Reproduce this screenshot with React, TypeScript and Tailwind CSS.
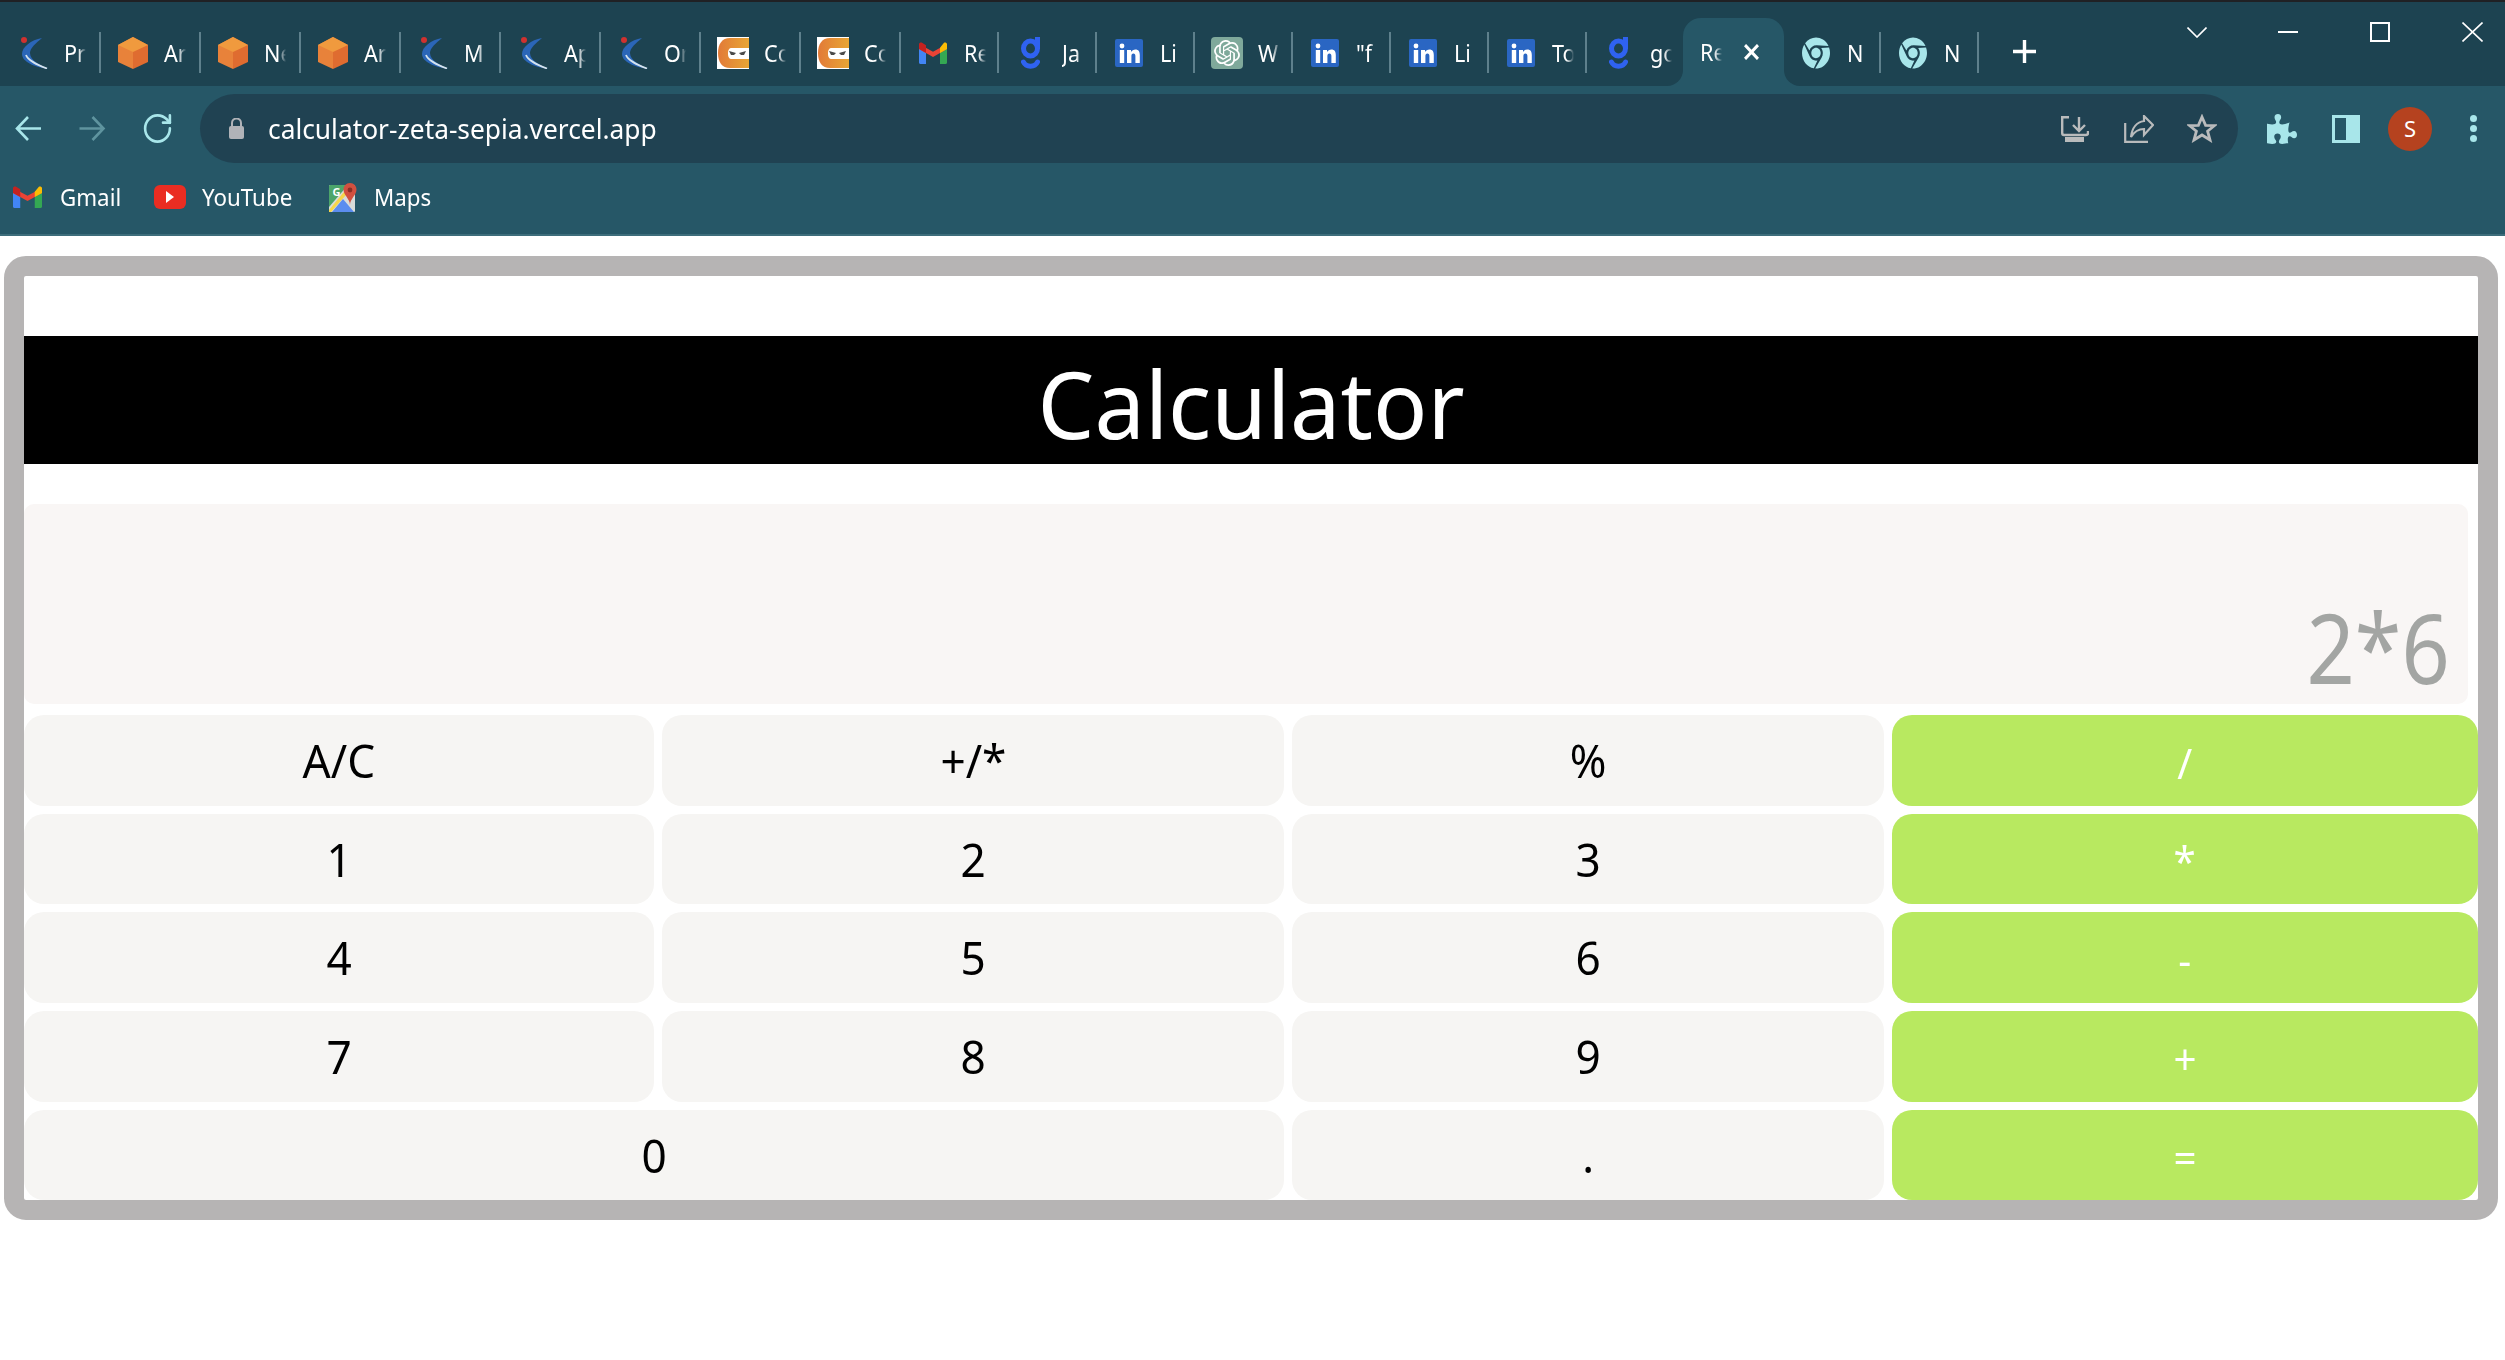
import { RotateCw } from 'lucide-react';
import { FaChrome, FaPuzzlePiece } from 'react-icons/fa';
import { SiOpenai } from 'react-icons/si';

type IconKind = 'kuma' | 'hex' | 'ninja' | 'gmail' | 'g' | 'in' | 'gpt' | 'chrome';

const tabs: { icon: IconKind; label: string; w: number }[] = [
  { icon: 'kuma', label: 'Pr', w: 100 },
  { icon: 'hex', label: 'Ar', w: 100 },
  { icon: 'hex', label: 'Ne', w: 100 },
  { icon: 'hex', label: 'Ar', w: 100 },
  { icon: 'kuma', label: 'M', w: 100 },
  { icon: 'kuma', label: 'Ap', w: 100 },
  { icon: 'kuma', label: 'On', w: 100 },
  { icon: 'ninja', label: 'Co', w: 100 },
  { icon: 'ninja', label: 'Co', w: 100 },
  { icon: 'gmail', label: 'Re', w: 98 },
  { icon: 'g', label: 'Ja', w: 98 },
  { icon: 'in', label: 'Li', w: 98 },
  { icon: 'gpt', label: 'W', w: 98 },
  { icon: 'in', label: '"f', w: 98 },
  { icon: 'in', label: 'Li', w: 98 },
  { icon: 'in', label: 'To', w: 98 },
];

function TabIcon({ kind }: { kind: IconKind }) {
  if (kind === 'kuma') {
    return (
      <svg viewBox="0 0 27 32" preserveAspectRatio="none" className="ml-[3px] w-[27px] h-8">
        <circle cx="3" cy="3" r="3" fill="#d0312f" />
        <path d="M21 1C10 3 1 10 1 17C1 25 14 30 27 32C20 28 9 24 9 16C9 11 15 6 21 1Z" fill="#2b66b8" />
        <path d="M5 18C7 24 17 28 26 31.5" fill="none" stroke="#d5e4ee" strokeWidth="1.8" />
      </svg>
    );
  }
  if (kind === 'hex') {
    return (
      <svg viewBox="0 0 30 32" preserveAspectRatio="none" className="w-[30px] h-8">
        <polygon points="15,0 30,8 30,25 15,32" fill="#df6c30" />
        <polygon points="15,0 0,8 0,25 15,32" fill="#e8823a" />
        <polygon points="15,0 30,8 15,15 0,8" fill="#f09a3e" />
      </svg>
    );
  }
  if (kind === 'ninja') {
    return (
      <svg viewBox="0 0 32 32" preserveAspectRatio="none" className="w-8 h-8">
        <defs>
          <linearGradient id="ninjaFill" x1="0" y1="0" x2="1" y2="0">
            <stop offset="0" stopColor="#e27a38" />
            <stop offset="1" stopColor="#e8a635" />
          </linearGradient>
        </defs>
        <rect width="32" height="32" fill="#ffffff" />
        <path d="M13 1H32V11H15C12 11 11 13 11 16.5C11 20 12 22 15 22H32V31H13C5 31 1 25 1 16C1 7 5 1 13 1Z" fill="url(#ninjaFill)" />
        <path d="M12 14L19 16L17 18H14ZM29 14L22 16L24 18H27Z" fill="#4a4a4a" />
      </svg>
    );
  }
  if (kind === 'gmail') {
    return <GmailIcon className="w-7 h-[22px]" />;
  }
  if (kind === 'g') {
    return (
      <svg viewBox="0 0 19 32" preserveAspectRatio="none" className="w-[19px] h-8">
        <ellipse cx="9.5" cy="11.5" rx="7" ry="7.5" fill="none" stroke="#2f62f0" strokeWidth="5" />
        <rect x="14" y="0" width="5" height="12" fill="#2f62f0" />
        <path d="M2.5 25C5 30.5 14 30.5 16.5 25" fill="none" stroke="#2f62f0" strokeWidth="5" strokeLinecap="round" />
      </svg>
    );
  }
  if (kind === 'in') {
    return (
      <svg viewBox="0 0 28 28" preserveAspectRatio="none" className="w-7 h-7">
        <rect width="28" height="28" rx="2" fill="#2a66c3" />
        <circle cx="7" cy="7" r="2.4" fill="#ffffff" />
        <rect x="4.8" y="11" width="4.4" height="13" fill="#ffffff" />
        <path d="M12 11H16V13C17 11.5 18.5 10.6 20.4 10.6C23.6 10.6 24.8 12.8 24.8 16V24H20.4V17C20.4 15.4 19.8 14.4 18.4 14.4C17 14.4 16.4 15.5 16.4 17V24H12Z" fill="#ffffff" />
      </svg>
    );
  }
  if (kind === 'gpt') {
    return (
      <div className="w-8 h-8 rounded-[4px] bg-[#7fa99b] flex items-center justify-center">
        <SiOpenai className="w-[26px] h-[26px] text-white" />
      </div>
    );
  }
  return <FaChrome className="w-7 h-8 text-[#a8e6ea]" preserveAspectRatio="none" />;
}

function GmailIcon({ className }: { className: string }) {
  return (
    <svg viewBox="0 0 28 34" preserveAspectRatio="none" className={className}>
      <path d="M0 9H7V34H2C1 34 0 33 0 32Z" fill="#4285f4" />
      <path d="M21 9H28V32C28 33 27 34 26 34H21Z" fill="#34a853" />
      <path d="M0 3L14 15L28 3V11L14 23L0 11Z" fill="#ea4335" />
      <path d="M21 9L25 1C26 0 28 1 28 3V11L21 17Z" fill="#fbbc04" />
      <path d="M0 3C0 1 2 0 3 1L7 5V17L0 11Z" fill="#c5221f" />
    </svg>
  );
}

function TabLabel({ label }: { label: string }) {
  return (
    <span className="block w-[22px] overflow-hidden whitespace-nowrap text-[24px] text-white [mask-image:linear-gradient(to_right,black_65%,transparent)]">
      <span className="inline-block origin-left scale-x-[.9]">{label}</span>
    </span>
  );
}

function Tab({ icon, label, w }: { icon: IconKind; label: string; w: number }) {
  return (
    <div className="flex items-center h-[41px]" style={{ width: w }}>
      <div className="w-[63px] shrink-0 flex justify-center">
        <TabIcon kind={icon} />
      </div>
      <TabLabel label={label} />
      <div className="ml-auto w-[2px] h-[41px] bg-[#5e808c]" />
    </div>
  );
}

function CalcKey({ label, accent, wide }: { label: string; accent?: boolean; wide?: boolean }) {
  return (
    <button
      className={`flex items-center justify-center rounded-[20px] ${wide ? 'col-span-2' : ''} ${
        accent ? 'bg-[#b8e960] text-white text-[42px] pt-[3px]' : 'bg-[#f6f5f3] text-black text-[46px]'
      }`}
    >
      <span className="inline-block scale-x-[.96]">{label}</span>
    </button>
  );
}

export default function App() {
  return (
    <div className="min-h-screen bg-white font-['Noto_Sans','Open_Sans',sans-serif]">
      <header className="bg-[#265767] h-[236px] border-b-2 border-[#3d6d7b]">
        <div className="h-[86px] bg-[#1d4351] border-t-2 border-[#202124] flex items-start">
          <div className="flex items-center mt-[30px] ml-[1px]">
            {tabs.map((t, i) => (
              <Tab key={i} {...t} />
            ))}
            <div className="flex items-center w-[96px] h-[41px]">
              <div className="w-[63px] shrink-0 flex justify-center">
                <TabIcon kind="g" />
              </div>
              <TabLabel label="go" />
            </div>
          </div>
          <div className="relative self-end w-[101px] h-[68px] bg-[#265767] rounded-t-[18px] flex items-center pl-[17px]">
            <div className="absolute -left-4 bottom-0 w-4 h-4 bg-[#265767]">
              <div className="w-full h-full bg-[#1d4351] rounded-br-[16px]" />
            </div>
            <div className="absolute -right-4 bottom-0 w-4 h-4 bg-[#265767]">
              <div className="w-full h-full bg-[#1d4351] rounded-bl-[16px]" />
            </div>
            <TabLabel label="Re" />
            <svg viewBox="0 0 15 15" className="ml-[22px] w-[15px] h-[16px]" stroke="#ffffff" strokeWidth="3" preserveAspectRatio="none">
              <path d="M1 1L14 14M14 1L1 14" />
            </svg>
          </div>
          <div className="flex items-center mt-[30px]">
            <Tab icon="chrome" label="N" w={97} />
            <Tab icon="chrome" label="N" w={98} />
            <svg viewBox="0 0 23 23" className="ml-[34px] mb-[3px] w-[23px] h-[23px]" stroke="#ffffff" strokeWidth="3.4">
              <path d="M11.5 0V23M0 11.5H23" />
            </svg>
          </div>
          <div className="flex items-center mt-[20px] h-[20px]">
            <svg viewBox="0 0 20 11" className="ml-[151px] w-[20px] h-[11px]" fill="none" stroke="#ffffff" strokeWidth="1.6">
              <path d="M0.5 0.5L10 10L19.5 0.5" />
            </svg>
            <div className="ml-[71px] w-[20px] h-[2px] bg-white" />
            <div className="ml-[72px] w-[20px] h-[20px] border-2 border-white" />
            <svg viewBox="0 0 21 20" className="ml-[72px] w-[21px] h-[20px]" fill="none" stroke="#ffffff" strokeWidth="1.6">
              <path d="M0.5 0.5L20.5 19.5M20.5 0.5L0.5 19.5" />
            </svg>
          </div>
        </div>

        <div className="flex items-start h-[77px] pt-2">
          <div className="flex items-center h-[69px] flex-none">
            <svg viewBox="0 0 26 25" className="ml-[15px] w-[26px] h-[25px]" fill="none" stroke="#a8e6ea" strokeWidth="2.6">
              <path d="M26 12.5H3M13 1L2 12.5L13 24" />
            </svg>
            <svg viewBox="0 0 26 25" className="ml-[38px] w-[27px] h-[25px]" fill="none" stroke="#5f949f" strokeWidth="2.6">
              <path d="M0 12.5H23M13 1L24 12.5L13 24" />
            </svg>
            <RotateCw className="ml-[35px] w-[33px] h-[35px] text-[#a8e6ea]" strokeWidth={1.9} preserveAspectRatio="none" />
          </div>
          <div className="ml-[26px] w-[2038px] h-[69px] bg-[#204252] rounded-[36px] flex items-center">
            <svg viewBox="0 0 15 21" preserveAspectRatio="none" className="ml-[29px] w-[15px] h-[21px]">
              <path d="M3 8V5a4.5 4.5 0 0 1 9 0V8" fill="none" stroke="#b0b3b8" strokeWidth="2" />
              <rect y="8" width="15" height="13" rx="2" fill="#b0b3b8" />
            </svg>
            <span className="ml-[24px] mb-[2px] inline-block origin-left scale-x-[.94] text-[28px] text-white">calculator-zeta-sepia.vercel.app</span>
            <svg viewBox="0 0 29 26" preserveAspectRatio="none" className="ml-auto w-[29px] h-[26px]" fill="none" stroke="#b9bbbc" strokeWidth="2.4">
              <path d="M9 1.2H2.2V17C2.2 18 3 19 4 19H26C27 19 28 18 28 17V15" />
              <path d="M19 1V14M13 9L19 15L25 9" />
              <rect x="5" y="21" width="19" height="5" fill="#b9bbbc" stroke="none" />
            </svg>
            <svg viewBox="0 0 30 28" preserveAspectRatio="none" className="ml-[35px] w-[30px] h-[28px]" fill="none" stroke="#b9bbbc" strokeWidth="2.2">
              <path d="M1.2 8V26.8H24" />
              <path d="M7 22C8 13 13 7 20 6V1L29 10L20 20V14C15 14 10 17 7 22Z" />
            </svg>
            <svg viewBox="0 0 30 29" preserveAspectRatio="none" className="ml-[33px] w-[30px] h-[29px]" fill="none" stroke="#b9bbbc" strokeWidth="2.8">
              <path d="M15 3L18.6 11.4L27.5 11.6L20.6 17.2L23 26L15 21L7 26L9.4 17.2L2.5 11.6L11.4 11.4Z" />
            </svg>
            <div className="w-[21px]" />
          </div>
          <div className="flex items-center h-[69px]">
            <FaPuzzlePiece className="ml-[29px] w-[30px] h-[30px] text-[#a8e6ea]" preserveAspectRatio="none" />
            <div className="ml-[35px] w-[28px] h-[28px] border-[#a8e6ea] border-y-[3px] border-l-[3px] border-r-[14px]" />
            <div className="ml-[28px] w-[44px] h-[44px] rounded-full bg-[#b5421f] text-white text-[22px] flex items-center justify-center">
              S
            </div>
            <div className="ml-[38px] flex flex-col gap-[3px]">
              <div className="w-[7px] h-[7px] rounded-full bg-[#a8e6ea]" />
              <div className="w-[7px] h-[7px] rounded-full bg-[#a8e6ea]" />
              <div className="w-[7px] h-[7px] rounded-full bg-[#a8e6ea]" />
            </div>
          </div>
        </div>

        <div className="flex items-center h-[71px] pb-[3px] text-white text-[24px]">
          <GmailIcon className="ml-[13px] w-[29px] h-[22px]" />
          <span className="ml-[18px] w-[60px] inline-block origin-left scale-x-[.93] whitespace-nowrap">Gmail</span>
          <div className="ml-[34px] w-[32px] h-[24px] rounded-[6px] bg-[#ea2d22] flex items-center justify-center">
            <div className="w-0 h-0 border-y-[6px] border-y-transparent border-l-[8px] border-l-white" />
          </div>
          <span className="ml-[16px] w-[91px] inline-block origin-left scale-x-[.93] whitespace-nowrap">YouTube</span>
          <svg viewBox="0 0 28 29" preserveAspectRatio="none" className="ml-[36px] w-[28px] h-[29px]">
            <rect y="2" width="26" height="27" rx="1" fill="#d9dcd9" />
            <path d="M0 3C0 2.500 0.500 2 1 2H19L0 24Z" fill="#4ca56a" />
            <path d="M0 27L19 4H24L2 29H0Z" fill="#f6d64a" />
            <path d="M3 29L14 16L25 29Z" fill="#5b8def" />
            <text x="3.500" y="13" fontSize="11" fontWeight="700" fill="#ffffff">G</text>
            <path d="M21 0C17 0 14.500 3 14.500 6.500C14.500 12 21 16 21 22C21 16 27.500 12 27.500 6.500C27.500 3 25 0 21 0Z" fill="#d1503f" />
            <circle cx="21" cy="7" r="2.400" fill="#8c2f26" />
          </svg>
          <span className="ml-[17px] w-[57px] inline-block origin-left scale-x-[.93] whitespace-nowrap">Maps</span>
        </div>
      </header>

      <main className="ml-1 mt-5 w-[2494px] h-[964px] border-[20px] border-[#b6b4b4] rounded-[22px] bg-white">
        <div className="mt-[60px] h-[128px] bg-black flex items-center justify-center text-white text-[94px] pt-[6px]">
          <span className="inline-block scale-x-[.957]">Calculator</span>
        </div>
        <div className="mt-10 w-[2444px] h-[200px] rounded-[10px] bg-[#f9f6f5] flex items-end justify-end pr-[18px] pb-[9px] text-[#a3a5a3] text-[96px] leading-none">
          <span className="inline-block origin-right scale-x-[.88]">2*6</span>
        </div>
        <div className="mt-[11px] grid grid-cols-[630px_622px_592px_586px] grid-rows-[91px_90px_91px_91px_90px] gap-2">
          <CalcKey label="A/C" />
          <CalcKey label="+/*" />
          <CalcKey label="%" />
          <CalcKey label="/" accent />
          <CalcKey label="1" />
          <CalcKey label="2" />
          <CalcKey label="3" />
          <CalcKey label="*" accent />
          <CalcKey label="4" />
          <CalcKey label="5" />
          <CalcKey label="6" />
          <CalcKey label="-" accent />
          <CalcKey label="7" />
          <CalcKey label="8" />
          <CalcKey label="9" />
          <CalcKey label="+" accent />
          <CalcKey label="0" wide />
          <CalcKey label="." />
          <CalcKey label="=" accent />
        </div>
      </main>
    </div>
  );
}
